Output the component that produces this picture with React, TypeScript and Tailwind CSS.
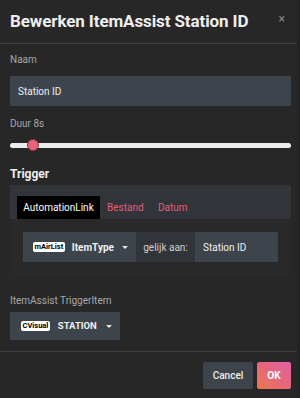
const Caret = ({ gap }: { gap: string }) => (
  <svg width="6" height="3" viewBox="0 0 6 3" className={`shrink-0 ${gap}`}>
    <path d="M0 0 L6 0 L3 3 Z" fill="#e5e5e5" />
  </svg>
);

const App = () => {
  return (
    <div className="w-[300px] h-[398px] bg-[#272727] font-['Roboto','Liberation_Sans',sans-serif] flex flex-col border-r-[3px] border-[#222]">
      {/* header */}
      <div className="h-[44px] pl-[10px] pr-[12px] flex items-center justify-between border-b border-[#3a3f44]">
        <span className="text-[17px] font-bold text-[#eeeeee] tracking-[-0.1px]">Bewerken ItemAssist Station ID</span>
        <span className="text-[12px] text-[#8a8a8a] leading-none -mt-[6px]">×</span>
      </div>

      {/* body */}
      <div className="flex-1 px-[10px] pr-[6px] flex flex-col">
        <div className="mt-[9px] h-[14px] leading-[14px] text-[10px] text-[#a8a8a8]">Naam</div>
        <div className="mt-[9px] h-[30px] bg-[#3d444b] flex items-center px-[8px] text-[10px] text-[#f0f0f0]">
          Station ID
        </div>

        <div className="mt-[11px] h-[14px] leading-[14px] text-[10px] text-[#a8a8a8]">Duur 8s</div>
        <div className="mt-[8px] h-[12px] relative flex items-center">
          <div className="w-full h-[5px] rounded-full bg-[#ececec]" />
          <div className="absolute left-[17px] top-[0px] w-[12px] h-[12px] rounded-full bg-[#e8647c] border border-[#8d3444]" />
        </div>

        <div className="mt-[14px] h-[18px] leading-[18px] text-[12px] font-bold text-[#eeeeee]">Trigger</div>

        <div className="mt-[2px] flex flex-col">
          <div className="h-[34px] bg-[#31353a] flex items-end pl-[7px]">
            <div className="h-[23px] w-[83px] bg-black text-white text-[10px] flex items-center justify-center">
              AutomationLink
            </div>
            <div className="h-[23px] w-[51px] flex items-center text-[10px] text-[#e25c77] ml-[7px]">Bestand</div>
            <div className="h-[23px] flex items-center text-[10px] text-[#e25c77]">Datum</div>
          </div>
          <div className="h-[58px] bg-[#292929] px-[13px] pt-[13px]">
            <div className="h-[30px] flex bg-[#31353a]">
              <div className="w-[113px] shrink-0 bg-[#3d444b] flex items-center pl-[10px]">
                <span className="bg-white rounded-[2px] px-[1.5px] h-[10px] leading-[10px] text-[7.5px] font-bold text-black">mAirList</span>
                <span className="ml-[7px] text-[10px] font-bold text-[#f0f0f0]">ItemType</span>
                <Caret gap="ml-[8px]" />
              </div>
              <div className="w-[59px] shrink-0 flex items-center justify-center text-[10px] text-[#cfcfcf]">gelijk aan:</div>
              <div className="flex-1 bg-[#3d444b] flex items-center pl-[8px] text-[10px] text-[#f0f0f0]">Station ID</div>
            </div>
          </div>
        </div>

        <div className="mt-[17px] h-[14px] leading-[14px] text-[10px] text-[#a8a8a8]">ItemAssist TriggerItem</div>
        <div className="mt-[4px] h-[28px] w-[110px] bg-[#3d444b] flex items-center pl-[11px]">
          <span className="bg-white rounded-[2px] px-[1.5px] h-[10px] leading-[10px] text-[7.5px] font-bold text-black">CVisual</span>
          <span className="ml-[8px] text-[9.5px] font-bold text-[#f0f0f0]">STATION</span>
          <Caret gap="ml-[9px]" />
        </div>
      </div>

      {/* footer */}
      <div className="h-[47px] border-t border-[#3a3f44] flex justify-end items-start pt-[10px] pr-[6px] gap-[4px]">
        <button className="h-[27px] w-[50px] bg-[#3d444b] rounded-[2px] text-[10px] font-medium text-[#eeeeee]">Cancel</button>
        <button className="h-[27px] w-[34px] rounded-[2px] text-[10px] font-bold text-white bg-gradient-to-tr from-[#e97a4a] via-[#e8667a] to-[#e260a8]">OK</button>
      </div>
    </div>
  );
};

export default App;
